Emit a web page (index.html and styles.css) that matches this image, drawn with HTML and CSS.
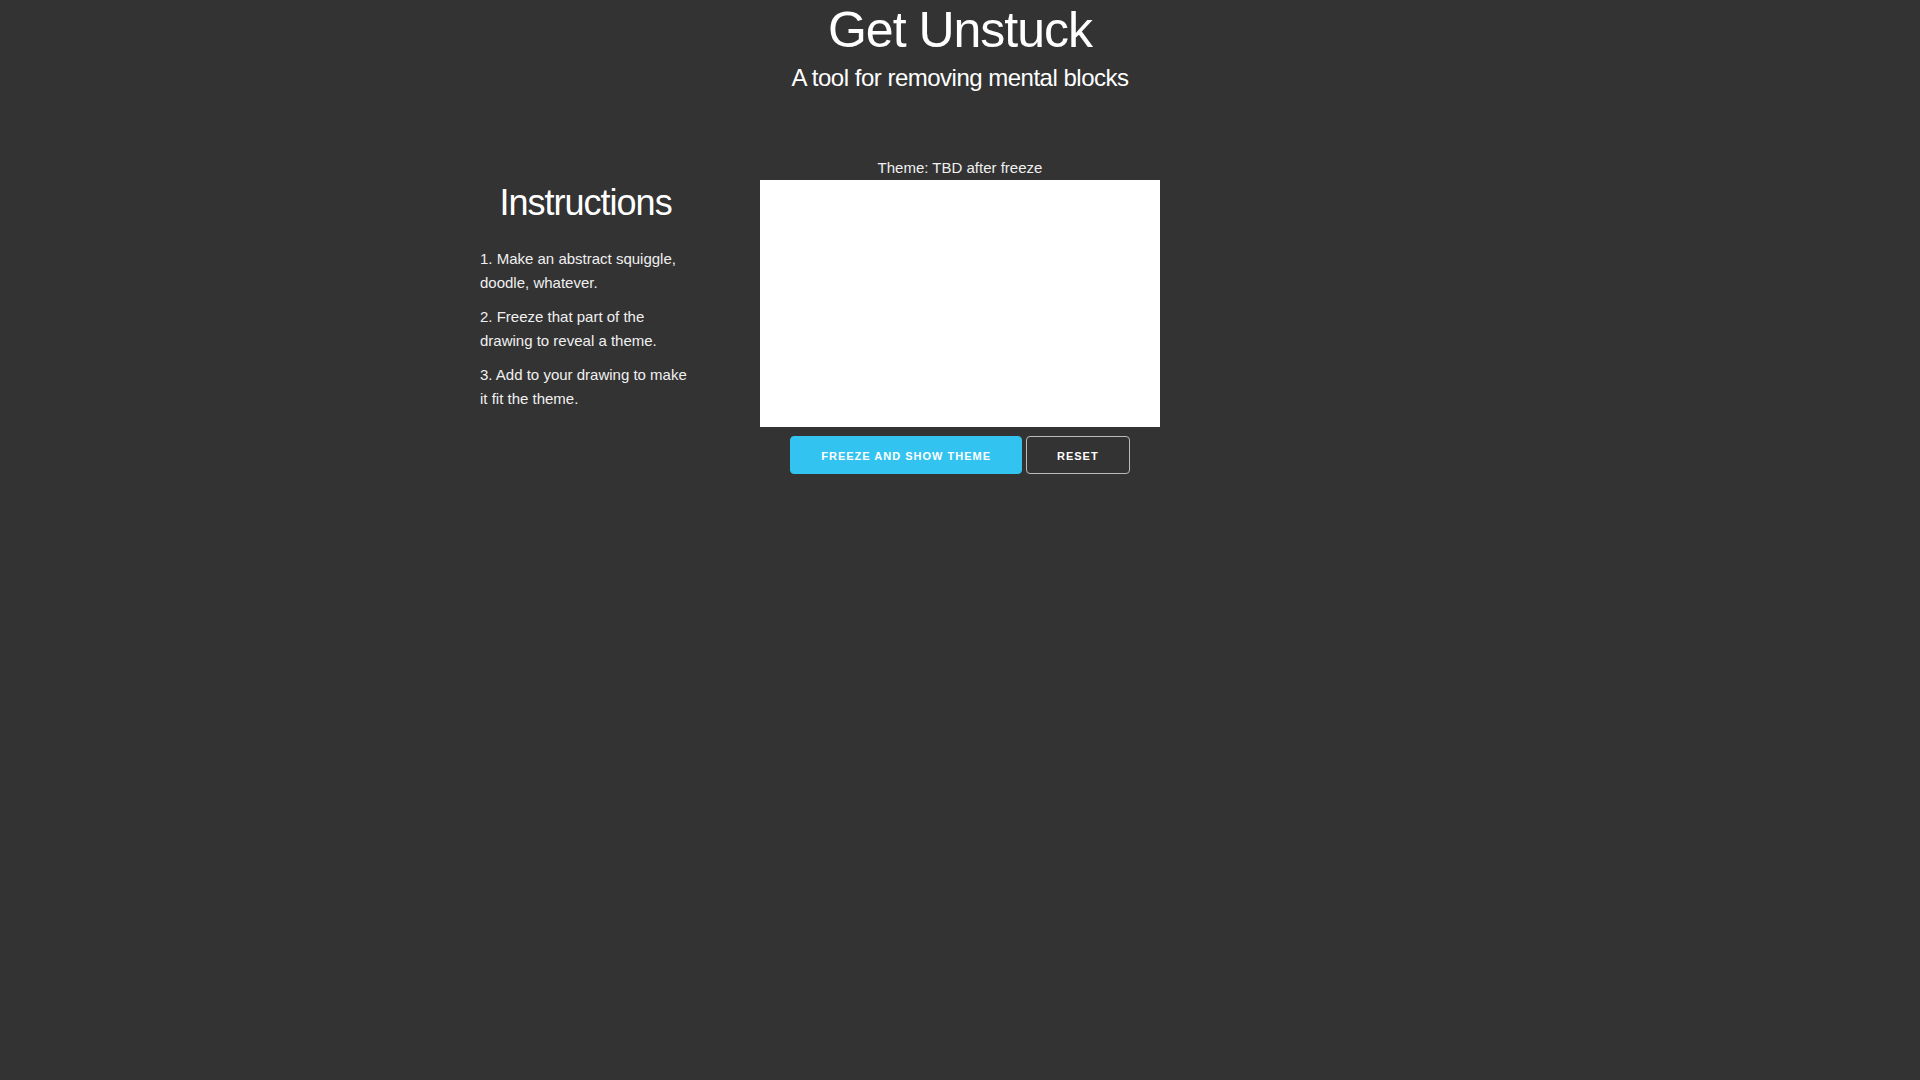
FILE: index.html
```html
<!DOCTYPE html>
<html lang="en">
<head>
<meta charset="utf-8">
<title>Get Unstuck</title>
<link rel="stylesheet" href="styles.css">
</head>
<body>
<div class="container">
  <header class="header">
    <h1 class="title">Get Unstuck</h1>
    <h5 class="subtitle">A tool for removing mental blocks</h5>
  </header>
  <div class="row">
    <div class="col-side">
      <h3 class="instructions-title">Instructions</h3>
      <ul class="steps">
        <li>1. Make an abstract squiggle, doodle, whatever.</li>
        <li>2. Freeze that part of the drawing to reveal a theme.</li>
        <li>3. Add to your drawing to make it fit the theme.</li>
      </ul>
    </div>
    <div class="col-main">
      <p class="theme">Theme: TBD after freeze</p>
      <canvas class="canvas" width="400" height="247"></canvas>
      <div class="buttons">
        <button class="btn btn-primary">Freeze and show theme</button>
        <button class="btn">Reset</button>
      </div>
    </div>
    <div class="col-side"></div>
  </div>
</div>
</body>
</html>
```
FILE: styles.css
```css
html, body {
  margin: 0;
  padding: 0;
}
body {
  background: #333333;
  color: #f0f0f0;
  font-family: "Liberation Sans", Arial, sans-serif;
  font-size: 15px;
  line-height: 1.6;
}
.container {
  width: 960px;
  margin: 0 auto;
}
.header {
  text-align: center;
  color: #ffffff;
}
.title {
  margin: 0;
  font-size: 50px;
  font-weight: 400;
  line-height: 1.2;
  letter-spacing: -1px;
}
.subtitle {
  margin: 0;
  font-size: 24px;
  font-weight: 400;
  line-height: 1.5;
  letter-spacing: -0.5px;
}
.row {
  display: grid;
  grid-template-columns: 22% 48% 22%;
  column-gap: 4%;
  margin-top: 60px;
}
.instructions-title {
  margin: 24px 0 20px;
  text-align: center;
  color: #ffffff;
  font-size: 36px;
  font-weight: 400;
  line-height: 1.3;
  letter-spacing: -1px;
}
.steps {
  list-style: none;
  margin: 0;
  padding: 0;
}
.steps li {
  margin: 0 0 10px;
}
.col-main {
  display: flex;
  flex-direction: column;
  align-items: center;
}
.theme {
  margin: 0;
  line-height: 24px;
}
.canvas {
  display: block;
  width: 400px;
  height: 247px;
  background: #ffffff;
}
.buttons {
  display: flex;
  gap: 4px;
  margin-top: 9px;
}
.btn {
  box-sizing: border-box;
  height: 38px;
  padding: 0 30px;
  border: 1px solid #bbbbbb;
  border-radius: 4px;
  background: transparent;
  color: #ffffff;
  font-family: "Liberation Sans", Arial, sans-serif;
  font-size: 11px;
  font-weight: 700;
  line-height: 38px;
  letter-spacing: 1px;
  text-transform: uppercase;
  cursor: pointer;
}
.btn-primary {
  background: #33c3f0;
  border-color: #33c3f0;
}
```
